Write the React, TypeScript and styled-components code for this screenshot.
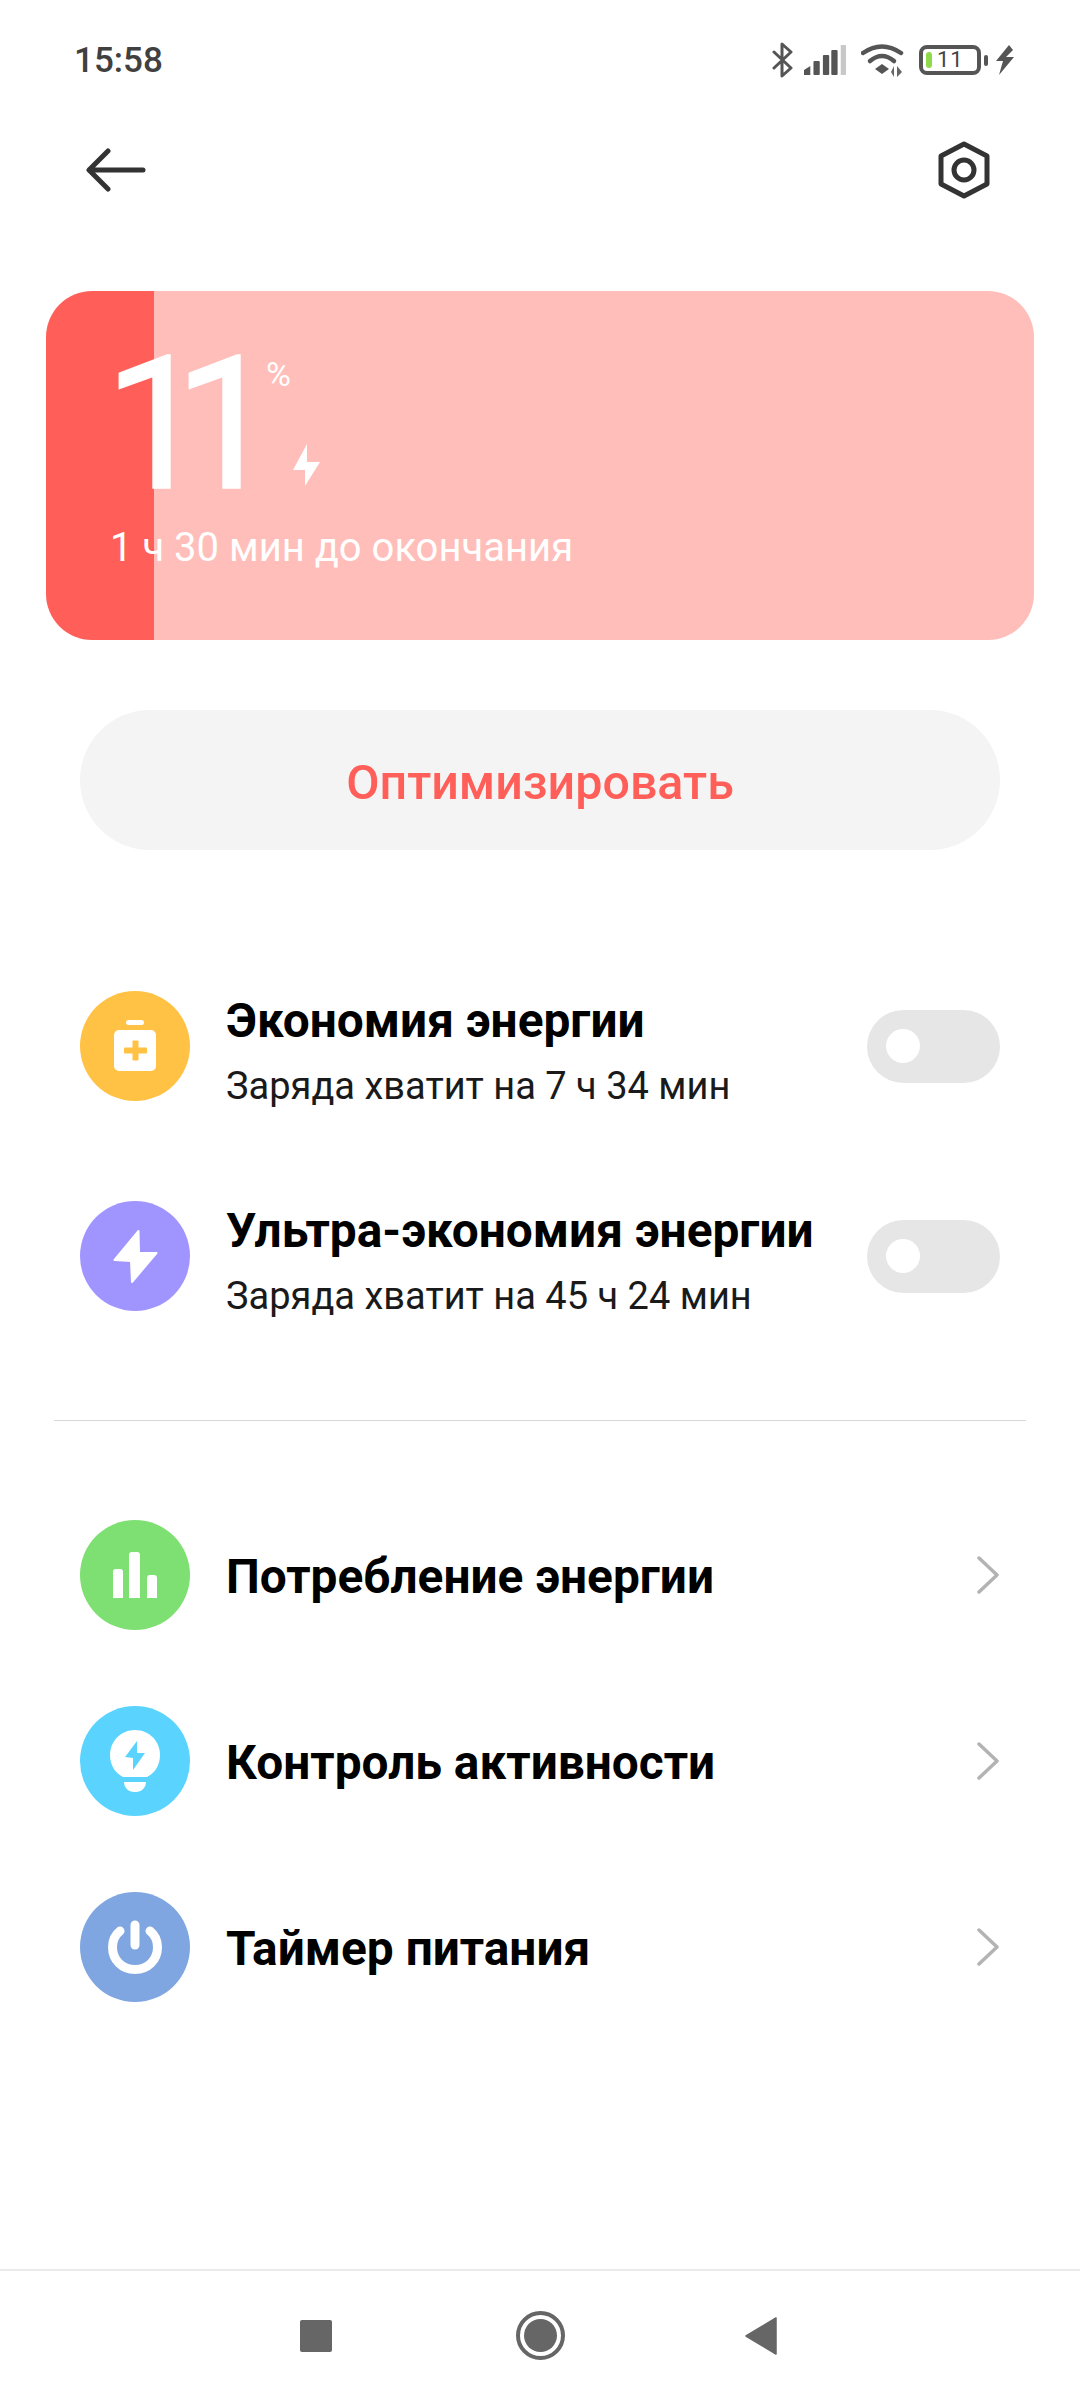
import React from "react";
import styled, { createGlobalStyle } from "styled-components";

const GlobalStyle = createGlobalStyle`
  html, body {
    margin: 0;
    padding: 0;
    background: #fff;
    font-family: Roboto, "Noto Sans", sans-serif;
  }
  * { box-sizing: border-box; }
`;

const Page = styled.div`
  width: 1080px;
  height: 2400px;
  display: flex;
  flex-direction: column;
  background: #fff;
  overflow: hidden;
`;

const StatusBar = styled.div`
  height: 120px;
  padding: 0 66px 0 74px;
  display: flex;
  align-items: center;
  justify-content: space-between;
`;

const Time = styled.span`
  font-size: 35px;
  font-weight: 500;
  color: #404040;
`;

const StatusIcons = styled.div`
  display: flex;
  align-items: center;
`;

const IconSlot = styled.svg<{ $gap?: number }>`
  display: block;
  margin-left: ${(p) => p.$gap ?? 0}px;
`;

const BatteryBody = styled.div`
  width: 62px;
  height: 30px;
  margin-left: 14px;
  border: 4px solid #555;
  border-radius: 8px;
  display: flex;
  align-items: center;
  padding-left: 3px;
  gap: 5px;
`;

const BatteryLevel = styled.div`
  width: 6px;
  height: 16px;
  border-radius: 3px;
  background: #8fd94a;
`;

const BatteryText = styled.span`
  font-size: 22px;
  line-height: 22px;
  color: #444;
  letter-spacing: 1px;
`;

const BatteryNub = styled.div`
  width: 4px;
  height: 11px;
  margin-left: 3px;
  border-radius: 2px;
  background: #555;
`;

const Header = styled.div`
  height: 100px;
  padding: 0 88px 0 86px;
  display: flex;
  align-items: center;
  justify-content: space-between;
`;

const BatteryCard = styled.div<{ $level: number }>`
  margin: 71px 46px 0;
  height: 349px;
  border-radius: 46px;
  padding: 55px 0 0 64px;
  color: #fff;
  background: linear-gradient(
    90deg,
    #ff5f58 ${(p) => p.$level}px,
    #ffbeb9 ${(p) => p.$level}px
  );
`;

const LevelRow = styled.div`
  display: flex;
  align-items: flex-start;
`;

const LevelNumber = styled.div`
  font-size: 185px;
  line-height: 158px;
  font-weight: 400;
  -webkit-text-stroke: 1.6px #fff;
  letter-spacing: -34px;
  margin-left: -6px;
`;

const LevelSide = styled.div`
  display: flex;
  flex-direction: column;
  align-items: flex-start;
  margin-left: 22px;
`;

const Percent = styled.span`
  font-size: 34px;
  line-height: 32px;
  margin-top: 12px;
`;

const ChargeBolt = styled.svg`
  display: block;
  margin: 54px 0 0 26px;
`;

const Remaining = styled.div`
  margin-top: 20px;
  font-size: 40px;
  line-height: 48px;
`;

const OptimizeButton = styled.button`
  display: block;
  margin: 70px 80px 0;
  width: 920px;
  height: 140px;
  padding: 4px 0 0;
  border: 0;
  border-radius: 70px;
  background: #f4f4f4;
  color: #ff5f58;
  font-family: inherit;
  font-size: 48.4px;
  font-weight: 500;
`;

const ModeList = styled.div`
  margin-top: 141px;
  display: flex;
  flex-direction: column;
  gap: 100px;
  padding: 0 80px;
`;

const Row = styled.div`
  display: flex;
  align-items: center;
  height: 110px;
`;

const RoundIcon = styled.div<{ $color: string }>`
  width: 110px;
  height: 110px;
  flex: none;
  border-radius: 50%;
  background: ${(p) => p.$color};
`;

const RowText = styled.div<{ $shift: number }>`
  margin: ${(p) => p.$shift}px 0 0 36px;
  flex: 1;
  display: flex;
  flex-direction: column;
`;

const RowTitle = styled.div`
  font-size: 47.8px;
  line-height: 56px;
  font-weight: 700;
  color: #000;
`;

const RowSub = styled.div`
  margin-top: 15px;
  font-size: 38px;
  line-height: 44px;
  color: #1a1a1a;
`;

const Toggle = styled.div`
  width: 133px;
  height: 73px;
  flex: none;
  border-radius: 37px;
  background: #e6e6e6;
  display: flex;
  align-items: center;
  padding-left: 19px;
`;

const Knob = styled.div`
  width: 34px;
  height: 34px;
  border-radius: 50%;
  background: #fff;
`;

const Divider = styled.div`
  margin: 109px 54px 0;
  height: 1px;
  background: #d8d8d8;
`;

const LinkList = styled.div`
  margin-top: 99px;
  display: flex;
  flex-direction: column;
  gap: 76px;
  padding: 0 80px;
`;

const Chevron = styled.svg`
  display: block;
  flex: none;
`;

const NavBar = styled.div`
  margin-top: auto;
  height: 131px;
  border-top: 2px solid #eaeaea;
  padding: 0 303px 0 300px;
  display: flex;
  align-items: center;
  justify-content: space-between;
`;

const NavSquare = styled.div`
  width: 32px;
  height: 32px;
  border-radius: 2px;
  background: #666;
`;

const NavHome = styled.div`
  width: 49px;
  height: 49px;
  margin-left: 4px;
  border-radius: 50%;
  border: 4px solid #666;
  display: flex;
  align-items: center;
  justify-content: center;
`;

const NavHomeDot = styled.div`
  width: 33px;
  height: 33px;
  border-radius: 50%;
  background: #666;
`;

const IconSvg = ({ children }: { children: React.ReactNode }) => (
  <svg width="110" height="110" viewBox="0 0 110 110">
    {children}
  </svg>
);

const SaverIcon = () => (
  <IconSvg>
    <rect x="46" y="29" width="18" height="5" rx="2.5" fill="#fff" />
    <rect x="34" y="39" width="42" height="41" rx="5" fill="#fff" />
    <rect x="44" y="56.5" width="23" height="6" rx="1" fill="#ffc244" />
    <rect x="52.5" y="49.5" width="6" height="20" rx="1" fill="#ffc244" />
  </IconSvg>
);

const UltraIcon = () => (
  <IconSvg>
    <path
      d="M58.5 30 L59 52 L76.5 52 L52 81 L51 60 L34.5 59 Z"
      fill="#fff"
      stroke="#fff"
      strokeWidth="2"
      strokeLinejoin="round"
    />
  </IconSvg>
);

const UsageIcon = () => (
  <IconSvg>
    <path d="M33 78V52a3 3 0 0 1 3-3h4a3 3 0 0 1 3 3v26z" fill="#fff" />
    <path d="M49 78V35a3 3 0 0 1 3-3h5a3 3 0 0 1 3 3v43z" fill="#fff" />
    <path d="M67 78V58a3 3 0 0 1 3-3h4a3 3 0 0 1 3 3v20z" fill="#fff" />
  </IconSvg>
);

const ActivityIcon = () => (
  <IconSvg>
    <path
      d="M43 71 C35 67 30 59 30 49 C30 35 41 24 55 24 C69 24 80 35 80 49 C80 59 75 67 67 71 Z"
      fill="#fff"
    />
    <path d="M44 76 H66 C66 82 61 86 56 86 H54 C49 86 44 82 44 76 Z" fill="#fff" />
    <path d="M57 35 L57 47 L65 47 L53 64 L53 52 L45 51 Z" fill="#5ad4ff" />
  </IconSvg>
);

const TimerIcon = () => (
  <IconSvg>
    <path
      d="M40 39 C35 43 32.5 49 32.5 55 C32.5 68 42 77.5 55 77.5 C68 77.5 77.5 68 77.5 55 C77.5 49 75 43 70 39"
      fill="none"
      stroke="#fff"
      strokeWidth="9"
      strokeLinecap="round"
    />
    <path d="M55 33 V53" stroke="#fff" strokeWidth="9" strokeLinecap="round" />
  </IconSvg>
);

const ChevronIcon = () => (
  <Chevron width="24" height="38" viewBox="0 0 24 38">
    <path
      d="M3 2 L21 19 L3 36"
      fill="none"
      stroke="#b3b3b3"
      strokeWidth="3.5"
      strokeLinecap="round"
      strokeLinejoin="round"
    />
  </Chevron>
);

const modes = [
  { title: "Экономия энергии", sub: "Заряда хватит на 7 ч 34 мин", color: "#ffc244", icon: <SaverIcon /> },
  { title: "Ультра-экономия энергии", sub: "Заряда хватит на 45 ч 24 мин", color: "#a095ff", icon: <UltraIcon /> },
];

const links = [
  { title: "Потребление энергии", color: "#7ee072", icon: <UsageIcon /> },
  { title: "Контроль активности", color: "#5ad4ff", icon: <ActivityIcon /> },
  { title: "Таймер питания", color: "#7fa6e0", icon: <TimerIcon /> },
];

export default function App() {
  return (
    <Page>
      <GlobalStyle />
      <StatusBar>
        <Time>15:58</Time>
        <StatusIcons>
          <IconSlot width="22" height="36" viewBox="0 0 22 36">
            <path
              d="M2 10 L19 26 L10 34 V2 L19 10 L2 26"
              fill="none"
              stroke="#555"
              strokeWidth="3"
              strokeLinecap="round"
              strokeLinejoin="round"
            />
          </IconSlot>
          <IconSlot $gap={10} width="42" height="30" viewBox="0 0 40 30" preserveAspectRatio="none">
            <path d="M0 30 V25 L6 21 V30 Z" fill="#555" />
            <rect x="9" y="16" width="6" height="14" rx="1" fill="#555" />
            <rect x="18" y="10" width="6" height="20" rx="1" fill="#555" />
            <rect x="26" y="5" width="6" height="25" rx="1" fill="#555" />
            <rect x="35" y="0" width="5" height="30" fill="#c8c8c8" />
          </IconSlot>
          <IconSlot $gap={15} width="44" height="34" viewBox="0 0 44 34">
            <path d="M2 10 Q21 -3 40 10" fill="none" stroke="#555" strokeWidth="4.5" strokeLinecap="round" />
            <path d="M9 18 Q21 8 33 18" fill="none" stroke="#555" strokeWidth="4.5" strokeLinecap="round" />
            <path d="M14 26 L21 21 L28 26 L21 31 Z" fill="#555" />
            <path d="M33 23 V34 L30 29 Z M36 34 V23 L41 29 Z" fill="#666" />
          </IconSlot>
          <BatteryBody>
            <BatteryLevel />
            <BatteryText>11</BatteryText>
          </BatteryBody>
          <BatteryNub />
          <IconSlot $gap={8} width="18" height="30" viewBox="0 0 18 30">
            <path d="M13 0 L0 16 L7 16 L3 30 L18 12 L10 12 L17 5 Z" fill="#555" />
          </IconSlot>
        </StatusIcons>
      </StatusBar>

      <Header>
        <svg width="60" height="46" viewBox="0 0 60 46">
          <path
            d="M57 23 H4 M22 4 L3 23 L22 42"
            fill="none"
            stroke="#333"
            strokeWidth="5"
            strokeLinecap="round"
            strokeLinejoin="round"
          />
        </svg>
        <svg width="56" height="60" viewBox="0 0 56 60">
          <path
            d="M28 4 L51 16 V44 L28 56 L5 44 V16 Z"
            fill="none"
            stroke="#333"
            strokeWidth="5"
            strokeLinejoin="round"
          />
          <circle cx="28" cy="30" r="10" fill="none" stroke="#333" strokeWidth="5" />
        </svg>
      </Header>

      <BatteryCard $level={108}>
        <LevelRow>
          <LevelNumber>11</LevelNumber>
          <LevelSide>
            <Percent>%</Percent>
            <ChargeBolt width="29" height="42" viewBox="0 0 29 42">
              <path d="M15 0 L1 26 L13 26 L13 42 L28 18 L15 18 Z" fill="#fff" />
            </ChargeBolt>
          </LevelSide>
        </LevelRow>
        <Remaining>1 ч 30 мин до окончания</Remaining>
      </BatteryCard>

      <OptimizeButton>Оптимизировать</OptimizeButton>

      <ModeList>
        {modes.map((m) => (
          <Row key={m.title}>
            <RoundIcon $color={m.color}>{m.icon}</RoundIcon>
            <RowText $shift={9}>
              <RowTitle>{m.title}</RowTitle>
              <RowSub>{m.sub}</RowSub>
            </RowText>
            <Toggle>
              <Knob />
            </Toggle>
          </Row>
        ))}
      </ModeList>

      <Divider />

      <LinkList>
        {links.map((l) => (
          <Row key={l.title}>
            <RoundIcon $color={l.color}>{l.icon}</RoundIcon>
            <RowText $shift={3}>
              <RowTitle>{l.title}</RowTitle>
            </RowText>
            <ChevronIcon />
          </Row>
        ))}
      </LinkList>

      <NavBar>
        <NavSquare />
        <NavHome>
          <NavHomeDot />
        </NavHome>
        <svg width="32" height="38" viewBox="0 0 32 38">
          <path d="M31 1 V37 L1 19 Z" fill="#666" stroke="#666" strokeWidth="1.5" strokeLinejoin="round" />
        </svg>
      </NavBar>
    </Page>
  );
}
